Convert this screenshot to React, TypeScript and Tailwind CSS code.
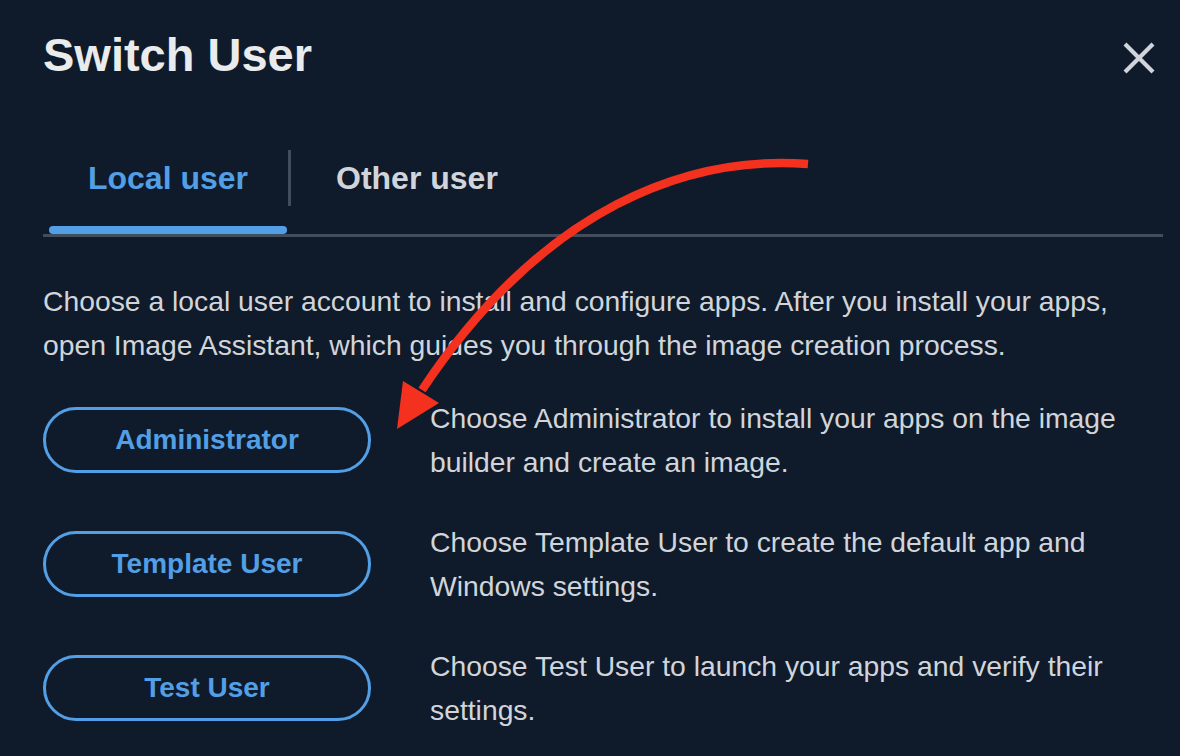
import React from "react";

type Role = {
  label: string;
  description: string;
};

const roles: Role[] = [
  {
    label: "Administrator",
    description:
      "Choose Administrator to install your apps on the image builder and create an image.",
  },
  {
    label: "Template User",
    description:
      "Choose Template User to create the default app and Windows settings.",
  },
  {
    label: "Test User",
    description:
      "Choose Test User to launch your apps and verify their settings.",
  },
];

function CloseIcon() {
  return (
    <svg viewBox="0 0 32 32" className="h-8 w-8" fill="none">
      <path d="M2 2L30 30M30 2L2 30" stroke="#d1d5db" strokeWidth="4.2" />
    </svg>
  );
}

// Red call-out arrow drawn on top of the dialog
function CalloutArrow() {
  return (
    <svg
      className="pointer-events-none absolute left-0 top-0"
      width="1180"
      height="756"
      viewBox="0 0 1180 756"
      fill="none"
    >
      <path
        d="M808 164 C690 155 545 205 422 390"
        stroke="#f4311f"
        strokeWidth="8.5"
      />
      <polygon points="397,429 403,381 439,403" fill="#f4311f" />
    </svg>
  );
}

export default function App() {
  return (
    <div className="relative h-[756px] w-[1180px] overflow-hidden bg-[#0f1b2a] font-['Liberation_Sans',Arial,sans-serif]">
      <div className="flex flex-col pl-[43px] pr-[17px] pt-[27px]">
        {/* Header */}
        <div className="flex items-start justify-between">
          <h1 className="text-[47px] font-bold leading-[56px] text-[#e9ebed]">
            Switch User
          </h1>
          <button className="mr-[8px] mt-[15px]">
            <CloseIcon />
          </button>
        </div>

        {/* Tabs */}
        <div className="mt-[67px] flex border-b-[3px] border-[#414d5c]">
          <button className="ml-[6px] flex w-[238px] flex-col">
            <span className="flex h-[56px] items-center justify-center text-[32px] font-bold leading-[56px] text-[#539fe5]">
              Local user
            </span>
            <span className="mt-[20px] h-[8px] rounded-full bg-[#539fe5]" />
          </button>
          <div className="ml-[1px] h-[56px] w-[3px] bg-[#414d5c]" />
          <button className="flex h-[56px] items-center pl-[45px] text-[32px] font-bold leading-[56px] text-[#d1d5db]">
            Other user
          </button>
        </div>

        <p className="mt-[42px] text-[28.3px] leading-[44px] text-[#d1d5db]">
          Choose a local user account to install and configure apps. After you
          install your apps, open Image Assistant, which guides you through the
          image creation process.
        </p>

        {/* Role choices */}
        <div className="mt-[29px] flex flex-col gap-[36px]">
          {roles.map((role) => (
            <div key={role.label} className="flex items-center gap-[59px]">
              <button className="flex h-[66px] w-[328px] shrink-0 items-center justify-center rounded-full border-[3px] border-[#539fe5] text-[28px] font-bold text-[#539fe5]">
                {role.label}
              </button>
              <p className="text-[28.3px] leading-[44px] text-[#d1d5db]">
                {role.description}
              </p>
            </div>
          ))}
        </div>
      </div>

      <CalloutArrow />
    </div>
  );
}
